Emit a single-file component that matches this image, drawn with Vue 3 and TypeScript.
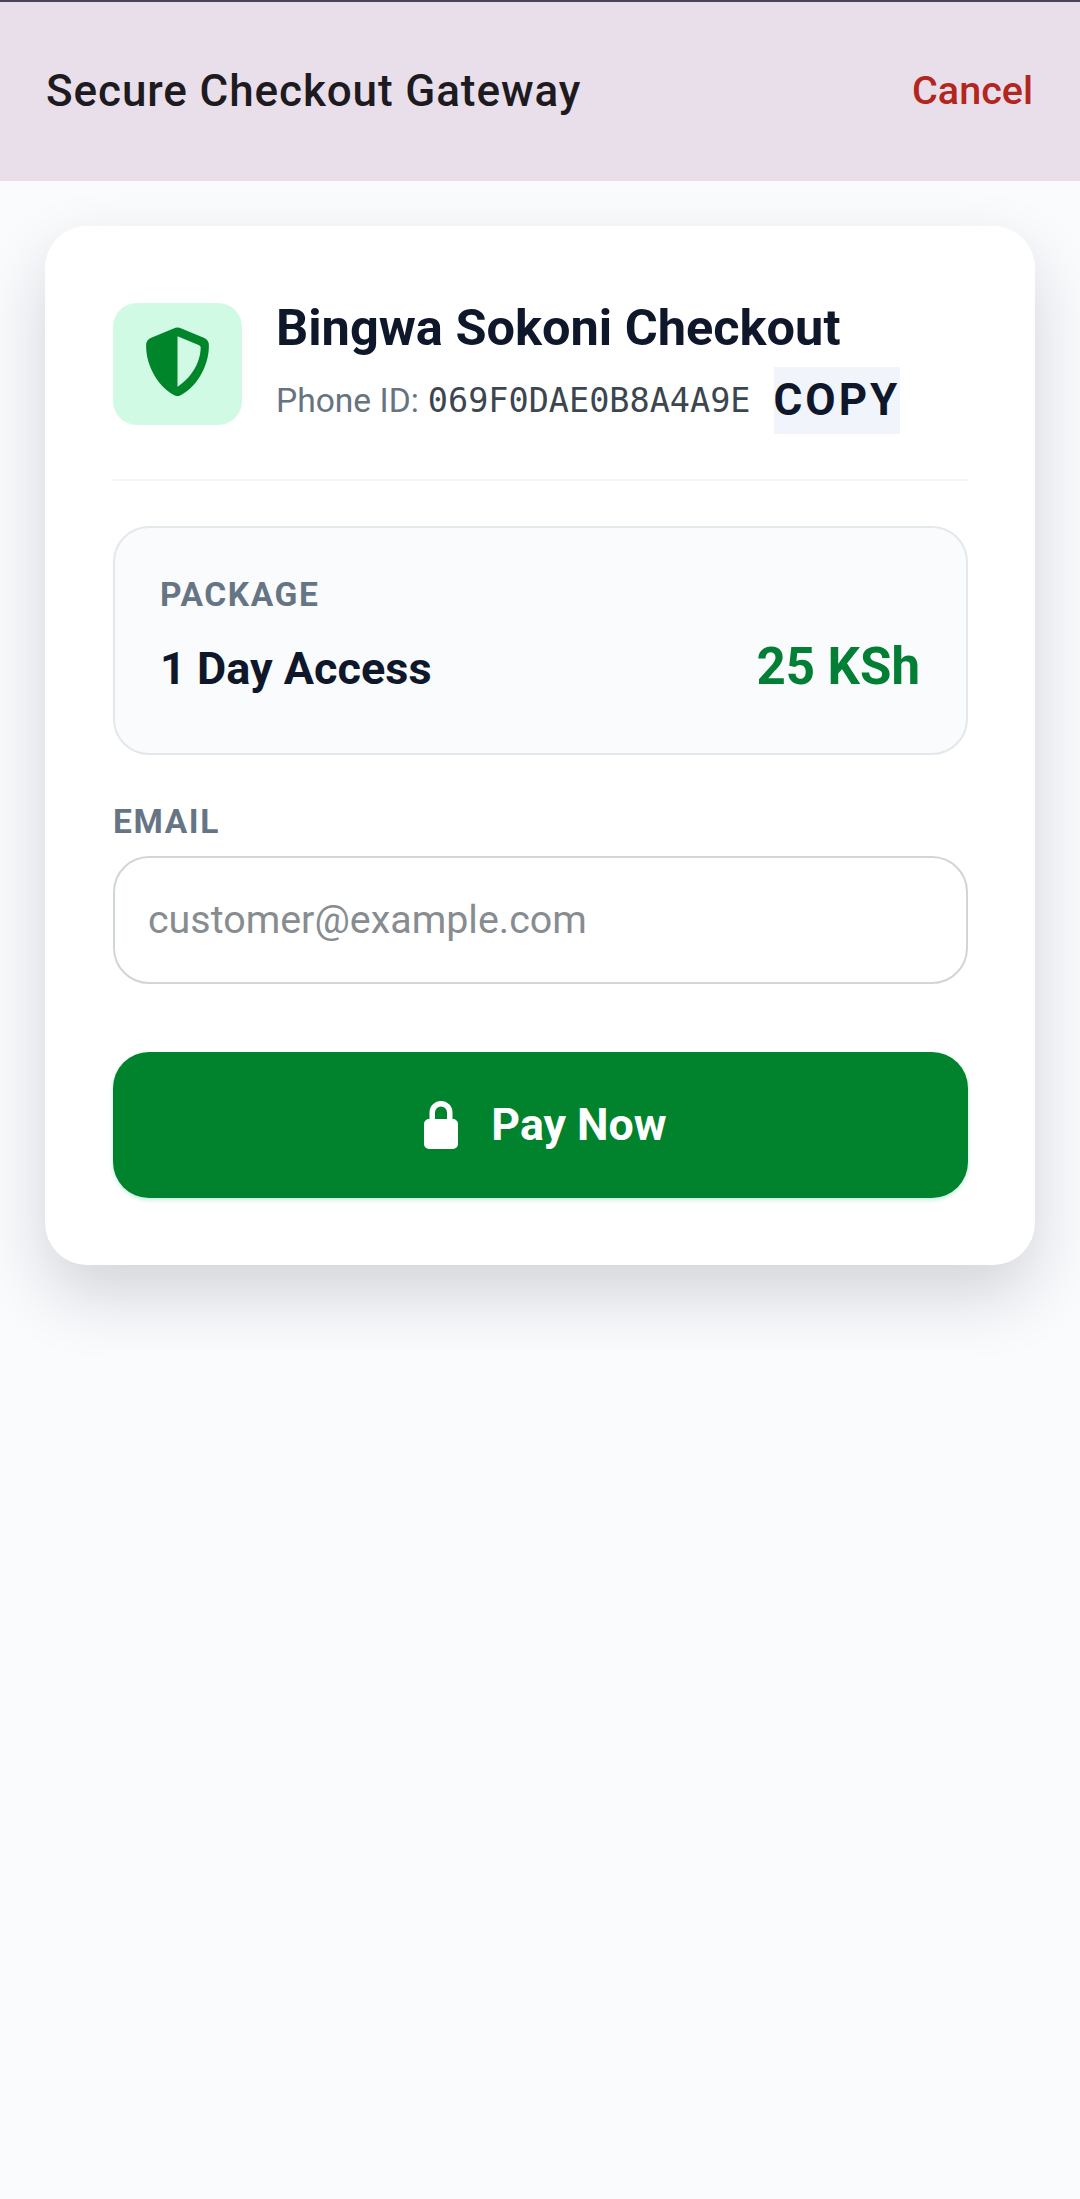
<script setup lang="ts">
const phoneId = '069F0DAE0B8A4A9E';
</script>

<template>
  <div class="page">
    <header class="topbar">
      <span class="topbar-title">Secure Checkout Gateway</span>
      <span class="cancel">Cancel</span>
    </header>

    <main class="card">
      <div class="merchant">
        <div class="shield-box">
          <svg class="shield" viewBox="0 0 61 67">
            <path fill-rule="evenodd" d="M28.500.8Q30.500 0 32.500.8L56 10.500Q61 12.500 61 18C61 40 47 60 33 66.500Q30.500 67.500 28 66.500C14 60 0 40 0 18Q0 12.500 5 10.500ZM30.500 9V58C42 51 53 36 53 20Q53 18.500 51.500 17.800Z" />
          </svg>
        </div>
        <div class="merchant-text">
          <h1>Bingwa Sokoni Checkout</h1>
          <div class="phone-row">
            <span class="phone-label">Phone ID:</span>
            <span class="phone-id">{{ phoneId }}</span>
            <span class="copy">COPY</span>
          </div>
        </div>
      </div>

      <section class="package">
        <div class="small-label">PACKAGE</div>
        <div class="package-row">
          <span class="package-name">1 Day Access</span>
          <span class="price">25 KSh</span>
        </div>
      </section>

      <label class="small-label email-label" for="email">EMAIL</label>
      <input id="email" class="email" type="email" placeholder="customer@example.com" />

      <button class="pay" type="button">
        <svg class="lock" viewBox="0 0 34 48">
          <path fill-rule="evenodd" d="M5.500 18v-6.500a11.500 11.500 0 0 1 23 0V18h.5a5 5 0 0 1 5 5v20a5 5 0 0 1-5 5H5a5 5 0 0 1-5-5V23a5 5 0 0 1 5-5h.5Zm5.500 0h12v-6.500a6 6 0 0 0-12 0V18Z" />
        </svg>
        <span>Pay Now</span>
      </button>
    </main>
  </div>
</template>

<style>
html,
body {
  margin: 0;
  background: #fafbfd;
}
</style>

<style scoped>
.page {
  min-height: 2199px;
  box-sizing: border-box;
  background: #fafbfd;
  font-family: Roboto, "Liberation Sans", sans-serif;
  overflow: hidden;
}

.topbar {
  height: 181px;
  box-sizing: border-box;
  border-top: 2px solid #4a4458;
  background: #e9dfeb;
  padding: 0 47px 2px 46px;
  display: flex;
  align-items: center;
  justify-content: space-between;
}

.topbar-title {
  font-size: 44px;
  font-weight: 500;
  color: #1d1b20;
  letter-spacing: 0.9px;
}

.cancel {
  font-size: 39.500px;
  font-weight: 500;
  color: #b3261e;
}

.card {
  margin: 45px 45px 0;
  height: 1039px;
  box-sizing: border-box;
  padding: 77px 67px 0 68px;
  background: #fff;
  border-radius: 42px;
  box-shadow: 0 30px 66px rgba(15, 23, 42, 0.17);
}

.merchant {
  display: flex;
  gap: 34px;
  height: 176px;
  border-bottom: 2px solid #f1f5f9;
}

.shield-box {
  width: 129px;
  height: 122px;
  box-sizing: border-box;
  padding-bottom: 6px;
  border-radius: 24px;
  background: #d1fae5;
  display: flex;
  align-items: center;
  justify-content: center;
  flex-shrink: 0;
}

.shield {
  width: 63px;
  height: 69px;
  fill: #00852b;
}

.merchant-text h1 {
  margin: 0;
  font-size: 50.500px;
  line-height: 50px;
  font-weight: 700;
  color: #0f172a;
}

.phone-row {
  margin-top: 14px;
  display: flex;
  align-items: center;
  white-space: nowrap;
}

.phone-label {
  font-size: 33.600px;
  color: #667380;
}

.phone-id {
  margin-left: 9px;
  font-family: "DejaVu Sans Mono", monospace;
  font-size: 33.500px;
  color: #3b4650;
}

.copy {
  margin-left: 23px;
  background: #f1f5fb;
  font-size: 44px;
  line-height: 67px;
  font-weight: 700;
  letter-spacing: 3px;
  color: #0f172a;
}

.package {
  margin-top: 45px;
  height: 229px;
  box-sizing: border-box;
  padding: 48px 46px 0 45px;
  border: 2px solid #e2e8ec;
  border-radius: 36px;
  background: #f9fbfc;
}

.small-label {
  display: block;
  font-size: 33.500px;
  line-height: 38px;
  font-weight: 700;
  letter-spacing: 1.600px;
  color: #667585;
}

.package-row {
  margin-top: 23px;
  display: flex;
  align-items: center;
  justify-content: space-between;
}

.package-name {
  font-size: 45px;
  font-weight: 700;
  color: #0f172a;
}

.price {
  padding-bottom: 3px;
  font-size: 51px;
  font-weight: 700;
  color: #027e35;
}

.email-label {
  margin-top: 48px;
}

.email {
  display: block;
  margin-top: 15px;
  width: 100%;
  height: 128px;
  box-sizing: border-box;
  padding: 0 34px 2px 33px;
  border: 2px solid #d0d5d8;
  border-radius: 36px;
  background: #fff;
  font-family: Roboto, "Liberation Sans", sans-serif;
  font-size: 39.400px;
  outline: none;
}

.email::placeholder {
  color: #878c91;
  opacity: 1;
}

.pay {
  margin-top: 68px;
  width: 100%;
  height: 146px;
  border: 0;
  padding: 0 0 0 10px;
  border-radius: 36px;
  background: #00832c;
  color: #fff;
  font-family: Roboto, "Liberation Sans", sans-serif;
  font-size: 44.700px;
  font-weight: 700;
  display: flex;
  align-items: center;
  justify-content: center;
  gap: 33px;
  box-shadow: 0 2px 4px rgba(16, 185, 129, 0.25);
}

.lock {
  width: 34px;
  height: 48px;
  fill: #fff;
}
</style>
